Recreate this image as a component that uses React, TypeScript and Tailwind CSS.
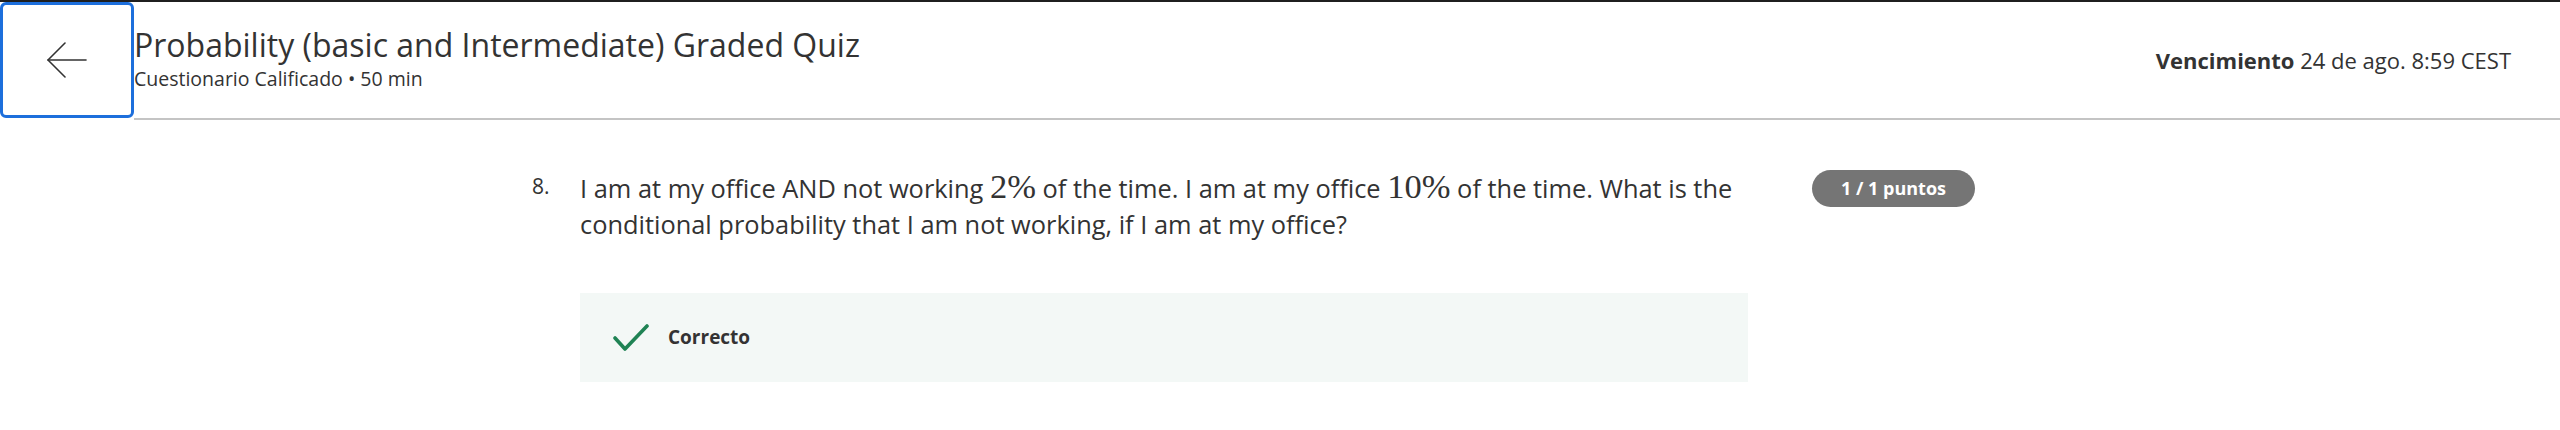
function ArrowBack() {
  return (
    <svg width="40" height="38" viewBox="0 0 40 38" fill="none" stroke="#333" strokeWidth="1.6" strokeLinecap="round" strokeLinejoin="round">
      <path d="M1 19 H39" />
      <path d="M18 2 L1 19 L18 36" />
    </svg>
  );
}

function CheckMark() {
  return (
    <svg width="36" height="28" viewBox="0 0 36 28" fill="none" stroke="#1f8354" strokeWidth="3.6" strokeLinecap="round" strokeLinejoin="round">
      <path d="M2 14 L12 25 L34 2" />
    </svg>
  );
}

function Math({ children }: { children: string }) {
  return <span className="font-['Liberation_Serif',serif] text-[1.36em] leading-none">{children}</span>;
}

export default function App() {
  return (
    <div className="min-h-screen bg-white font-['Open_Sans',sans-serif] text-[#333]">
      <div className="h-[2px] bg-[#1f1f1f]" />

      <header className="flex items-start h-[118px]">
        <button className="w-[134px] h-[116px] shrink-0 flex items-center justify-center border-[3px] border-[#1d6fdc] rounded-[6px] bg-white">
          <ArrowBack />
        </button>
        <div className="flex-1 h-[118px] flex items-start justify-between border-b-2 border-[#c4c4c4] pr-[49px]">
          <div className="pt-[23px]">
            <h1 className="text-[32px] leading-[40px] font-normal">Probability (basic and Intermediate) Graded Quiz</h1>
            <p className="mt-[2px] text-[19.5px] leading-[24px]">Cuestionario Calificado • 50 min</p>
          </div>
          <div className="h-[116px] flex items-center text-[22px] leading-[30px]">
            <span className="font-bold">Vencimiento</span>
            <span>&nbsp;24 de ago. 8:59 CEST</span>
          </div>
        </div>
      </header>

      <main className="pt-[49px] pl-[532px]">
        <div className="flex items-start">
          <div className="w-[48px] shrink-0 text-[21px] leading-[34px]">8.</div>
          <div className="w-[1168px] shrink-0">
            <p className="text-[25.4px] leading-[36px]">
              I am at my office AND not working <Math>2%</Math> of the time. I am at my office <Math>10%</Math> of the time. What is the conditional probability that I am not working, if I am at my office?
            </p>
            <div className="mt-[51px] h-[89px] bg-[#f3f8f6] flex items-center pl-[33px] gap-[19px]">
              <CheckMark />
              <span className="text-[19px] font-bold text-[#333]">Correcto</span>
            </div>
          </div>
          <div className="ml-[64px] mt-[1px] h-[37px] px-[29px] rounded-full bg-[#757575] text-white font-bold text-[18px] flex items-center">
            1 / 1 puntos
          </div>
        </div>
      </main>
    </div>
  );
}
